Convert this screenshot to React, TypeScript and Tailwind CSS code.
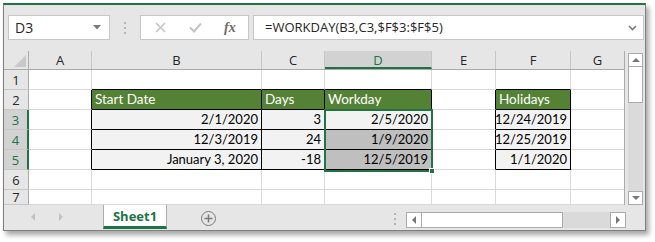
import React from "react";

const COLS = [
  { k: "A", w: 63 },
  { k: "B", w: 170 },
  { k: "C", w: 63 },
  { k: "D", w: 107 },
  { k: "E", w: 64 },
  { k: "F", w: 75 },
  { k: "G", w: 54 },
];

type Cell = { t?: string; kind?: "head" | "data" | "sel" };

const DATA: Record<string, Cell> = {
  B2: { t: "Start Date", kind: "head" },
  C2: { t: "Days", kind: "head" },
  D2: { t: "Workday", kind: "head" },
  F2: { t: "Holidays", kind: "head" },
  B3: { t: "2/1/2020", kind: "data" },
  C3: { t: "3", kind: "data" },
  D3: { t: "2/5/2020", kind: "data" },
  F3: { t: "12/24/2019", kind: "data" },
  B4: { t: "12/3/2019", kind: "data" },
  C4: { t: "24", kind: "data" },
  D4: { t: "1/9/2020", kind: "sel" },
  F4: { t: "12/25/2019", kind: "data" },
  B5: { t: "January 3, 2020", kind: "data" },
  C5: { t: "-18", kind: "data" },
  D5: { t: "12/5/2019", kind: "sel" },
  F5: { t: "1/1/2020", kind: "data" },
};

const ROWS = [1, 2, 3, 4, 5, 6, 7];

// cells inside the black-bordered tables
function boxed(col: string, row: number) {
  if (row < 2 || row > 5) return false;
  return col === "B" || col === "C" || col === "D" || col === "F";
}

function GridCell({ col, row, w }: { col: string; row: number; w: number }) {
  const cell = DATA[col + row];
  const idx = COLS.findIndex((c) => c.k === col);
  const next = COLS[idx + 1]?.k;
  const rightBlack = boxed(col, row) || (next ? boxed(next, row) : false);
  const bottomBlack = boxed(col, row) || boxed(col, row + 1);
  const bg =
    cell?.kind === "head"
      ? "bg-[#548235] text-white justify-start pl-[3px] text-[13.5px]"
      : cell?.kind === "sel"
        ? "bg-[#bfbfbf] text-black justify-end pr-[3px] text-[13px]"
        : cell?.kind === "data"
          ? "bg-[#f2f2f2] text-black justify-end pr-[3px] text-[13px]"
          : "bg-white";
  return (
    <div
      className={`flex h-full shrink-0 items-end whitespace-nowrap border-r border-b pb-[1px] leading-[17px] ${
        rightBlack ? "border-r-black" : "border-r-[#d9d9d9]"
      } ${bottomBlack ? "border-b-black" : "border-b-[#d9d9d9]"} ${bg}`}
      style={{ width: w }}
    >
      {cell?.t}
    </div>
  );
}

function ColHeader() {
  return (
    <div className="flex h-[19px] border-b border-[#ababab] leading-[16px]">
      <div className="relative w-[25px] shrink-0 border-r border-[#ababab]">
        <svg className="absolute bottom-[2px] right-[2px]" width="12" height="12" viewBox="0 0 12 12">
          <polygon points="12,0 12,12 0,12" fill="#c8c8c8" />
        </svg>
      </div>
      {COLS.map((c) =>
        c.k === "D" ? (
          <div
            key={c.k}
            className="flex shrink-0 items-center justify-center border-r border-[#c6c6c6] border-b-2 border-b-[#217346] bg-[#d2d2d2] pt-[1px] text-[#217346]"
            style={{ width: c.w }}
          >
            {c.k}
          </div>
        ) : (
          <div
            key={c.k}
            className="flex shrink-0 items-center justify-center border-r border-[#c6c6c6] text-[#262626]"
            style={{ width: c.w }}
          >
            {c.k}
          </div>
        )
      )}
    </div>
  );
}

function Arrow({ dir }: { dir: "up" | "down" | "left" | "right" }) {
  const pts = {
    up: "0,5 4,1 8,5",
    down: "0,1 8,1 4,5",
    left: "5,0 5,8 1,4",
    right: "1,0 1,8 5,4",
  }[dir];
  const horiz = dir === "left" || dir === "right";
  return (
    <svg width={horiz ? 6 : 8} height={horiz ? 8 : 6} viewBox={horiz ? "0 0 6 8" : "0 0 8 6"}>
      <polygon points={pts} fill="#777777" />
    </svg>
  );
}

export default function App() {
  return (
    <div className="h-[242px] w-[655px] overflow-hidden bg-white pt-[3px] pl-[3px] font-['Open_Sans',sans-serif]">
      <div className="flex h-[228px] w-[643px] flex-col border-x border-b border-t-2 border-[#7f7f7f] border-t-[#217346] bg-[#e6e6e6] shadow-[3px_4px_5px_rgba(0,0,0,0.35)]">
        {/* formula bar */}
        <div className="flex h-[46px] shrink-0 items-start pt-[10px] pl-[4px] pr-[1px]">
          <div className="flex h-[25px] w-[102px] items-center justify-between border border-[#c6c6c6] bg-white pr-[8px] pl-[6px] text-[14px] text-[#262626]">
            <span>D3</span>
            <svg width="8" height="5" viewBox="0 0 8 5">
              <polygon points="0,0 8,0 4,4.5" fill="#7a7a7a" />
            </svg>
          </div>
          <div className="flex h-[25px] w-[30px] flex-col items-center justify-center gap-[3px]">
            <span className="h-[2px] w-[2px] bg-[#b4b4b4]" />
            <span className="h-[2px] w-[2px] bg-[#b4b4b4]" />
            <span className="h-[2px] w-[2px] bg-[#b4b4b4]" />
          </div>
          <div className="flex h-[25px] w-[109px] items-center border border-[#c6c6c6] bg-white">
            <svg className="ml-[14px]" width="11" height="11" viewBox="0 0 11 11">
              <path d="M1 1 L10 10 M10 1 L1 10" stroke="#c4c4c4" strokeWidth="1.6" />
            </svg>
            <svg className="ml-[23px]" width="13" height="11" viewBox="0 0 13 11">
              <path d="M1 5.5 L5 9.5 L12 1.5" stroke="#c4c4c4" strokeWidth="2" fill="none" />
            </svg>
            <span className="ml-[22px] font-['Liberation_Serif',serif] text-[14px] font-bold italic text-[#6b6b6b]">
              fx
            </span>
          </div>
          <div className="ml-[4px] flex h-[25px] flex-1 items-center justify-between border border-[#c6c6c6] bg-white pl-[11px] pr-[6px] text-[13px] text-[#262626]">
            <span>=WORKDAY(B3,C3,$F$3:$F$5)</span>
            <svg width="9" height="6" viewBox="0 0 9 6">
              <path d="M1 1 L4.5 4.5 L8 1" stroke="#7a7a7a" strokeWidth="1.6" fill="none" />
            </svg>
          </div>
        </div>

        {/* grid + vertical scrollbar */}
        <div className="flex h-[154px] shrink-0">
          <div className="relative w-[621px] shrink-0 overflow-hidden border-r border-[#ababab] bg-white text-[13px]">
            <div className="bg-[#e6e6e6]">
              <ColHeader />
            </div>
            {ROWS.map((r) => {
              const sel = r >= 3 && r <= 5;
              return (
                <div key={r} className={`flex ${r === 7 ? "h-[15px]" : "h-[20px]"} font-['Lato',sans-serif]`}>
                  <div
                    className={`flex w-[25px] shrink-0 items-center justify-center border-b border-[#c6c6c6] font-['Open_Sans',sans-serif] text-[13px] leading-[16px] ${
                      sel
                        ? "border-r-2 border-r-[#217346] bg-[#d2d2d2] text-[#217346]"
                        : "border-r border-r-[#ababab] bg-[#e6e6e6] text-[#262626]"
                    }`}
                  >
                    {r}
                  </div>
                  {COLS.map((c) => (
                    <GridCell key={c.k} col={c.k} row={r} w={c.w} />
                  ))}
                </div>
              );
            })}
            {/* selection D3:D5 */}
            <div className="absolute top-[58px] left-[320px] h-[63px] w-[109px] border-2 border-[#217346]" />
            <div className="absolute top-[117px] left-[425px] h-[6px] w-[6px] border border-white bg-[#217346]" />
          </div>
          <div className="ml-[3px] flex w-[15px] flex-col pt-[2px]">
            <div className="flex h-[14px] items-center justify-center border border-[#ababab] bg-white">
              <Arrow dir="up" />
            </div>
            <div className="h-[36px] border-x border-b border-[#ababab] bg-white" />
            <div className="flex-1 bg-[#dadada]" />
            <div className="flex h-[14px] items-center justify-center border border-[#ababab] bg-white">
              <Arrow dir="down" />
            </div>
          </div>
        </div>

        {/* sheet tabs */}
        <div className="flex flex-1 items-start">
          <div className="flex h-[24px] w-[99px] items-center gap-[22px] pl-[26px]">
            <svg width="6" height="8" viewBox="0 0 6 8">
              <polygon points="5,0 5,8 1,4" fill="#c2c2c2" />
            </svg>
            <svg width="6" height="8" viewBox="0 0 6 8">
              <polygon points="1,0 1,8 5,4" fill="#c2c2c2" />
            </svg>
          </div>
          <div className="flex h-[24px] w-[64px] items-center justify-center border-x border-b-[3px] border-x-[#ababab] border-b-[#217346] bg-white pt-[2px] text-[13px] font-bold text-[#217346]">
            Sheet1
          </div>
          <div className="ml-[34px] mt-[6px] flex h-[15px] w-[15px] items-center justify-center rounded-full border-[1.5px] border-[#7a7a7a]">
            <svg width="9" height="9" viewBox="0 0 9 9">
              <path d="M4.5 0.5 V8.5 M0.5 4.5 H8.5" stroke="#7a7a7a" strokeWidth="1.5" />
            </svg>
          </div>
          <div className="ml-[174px] mt-[7px] flex h-[14px] w-[10px] flex-col items-center justify-between py-[1px]">
            <span className="h-[2px] w-[2px] bg-[#b4b4b4]" />
            <span className="h-[2px] w-[2px] bg-[#b4b4b4]" />
            <span className="h-[2px] w-[2px] bg-[#b4b4b4]" />
          </div>
          <div className="ml-[6px] mt-[7px] flex h-[16px] w-[220px]">
            <div className="flex w-[16px] items-center justify-center border border-[#ababab] bg-white">
              <Arrow dir="left" />
            </div>
            <div className="w-[141px] border-y border-r border-[#ababab] bg-white" />
            <div className="flex-1 bg-[#dadada]" />
            <div className="flex w-[16px] items-center justify-center border border-[#ababab] bg-white">
              <Arrow dir="right" />
            </div>
          </div>
        </div>
      </div>
    </div>
  );
}
